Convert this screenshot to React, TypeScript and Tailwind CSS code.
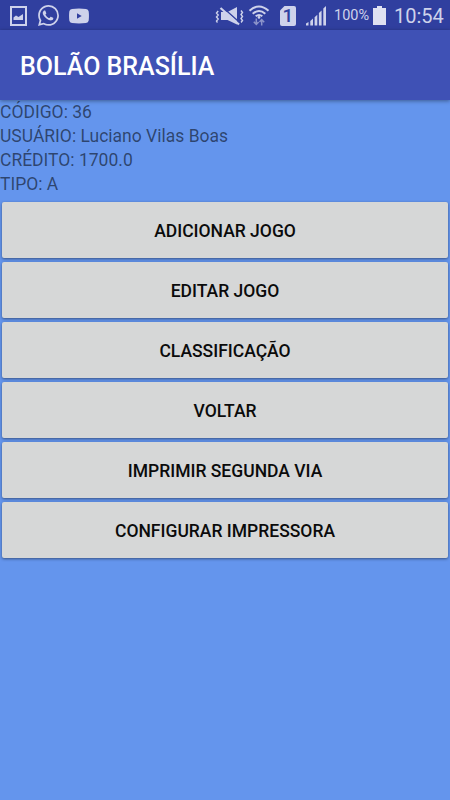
import type { ReactNode } from "react";

const INFO = ["CÓDIGO: 36", "USUÁRIO: Luciano Vilas Boas", "CRÉDITO: 1700.0", "TIPO: A"];

const ACTIONS = [
  "ADICIONAR JOGO",
  "EDITAR JOGO",
  "CLASSIFICAÇÃO",
  "VOLTAR",
  "IMPRIMIR SEGUNDA VIA",
  "CONFIGURAR IMPRESSORA",
];

// ---------------------------------------------------------------------------
// Status bar icons
// ---------------------------------------------------------------------------

function PictureIcon() {
  return (
    <svg className="ml-[10px]" width="17" height="20" viewBox="0 0 17 20" fill="none">
      <path d="M1 1h15v18H1z" stroke="currentColor" strokeWidth="2" />
      <path d="M3.5 14v-2.5l2.5-2 2.500 1.500 4.500-3v6z" fill="currentColor" />
    </svg>
  );
}

function WhatsAppIcon() {
  return (
    <svg className="ml-[11px]" width="21" height="21" viewBox="0 0 24 24" fill="currentColor">
      <path d="M.06 24l1.69-6.16a11.87 11.87 0 0 1-1.59-5.95C.16 5.34 5.5 0 12.05 0a11.82 11.82 0 0 1 8.41 3.49 11.82 11.82 0 0 1 3.48 8.41c0 6.56-5.34 11.9-11.89 11.9a11.9 11.9 0 0 1-5.69-1.45zM6.65 20.19c1.68 1 3.28 1.6 5.39 1.6 5.45 0 9.89-4.43 9.89-9.88A9.86 9.86 0 0 0 12.05 2c-5.45 0-9.88 4.43-9.88 9.88 0 2.23.65 3.89 1.74 5.63l-1 3.65z" />
      <path d="M17.44 14.75c-.07-.12-.27-.2-.57-.35s-1.76-.87-2.03-.97c-.27-.1-.47-.15-.67.15-.2.3-.77.97-.94 1.16-.17.2-.35.23-.64.08-.3-.15-1.26-.46-2.39-1.48-.88-.79-1.48-1.76-1.65-2.06-.17-.3-.02-.46.13-.6.13-.14.3-.35.45-.53.15-.17.2-.29.3-.49.1-.2.05-.37-.03-.52-.07-.15-.67-1.61-.91-2.21-.24-.58-.49-.5-.67-.51l-.57-.01c-.2 0-.52.07-.79.37s-1.04 1.02-1.04 2.48 1.06 2.88 1.21 3.07c.15.2 2.1 3.2 5.08 4.49.71.3 1.26.49 1.69.63.71.22 1.36.19 1.87.12.57-.09 1.76-.72 2.01-1.41.25-.7.25-1.3.17-1.42z" />
    </svg>
  );
}

function YoutubeIcon() {
  return (
    <svg className="ml-[10px]" width="20" height="16" viewBox="0 0 20 16">
      <path
        d="M3 .9Q10 .2 17 .9q2.4.3 2.7 2.7.5 4.4 0 8.8-.3 2.4-2.7 2.7-7 .7-14 0Q.6 14.8.3 12.4q-.5-4.4 0-8.8Q.6 1.2 3 .9zM8 5.2v5.6l4.7-2.8z"
        fill="currentColor"
        fillRule="evenodd"
      />
    </svg>
  );
}

function MuteIcon() {
  return (
    <svg width="29" height="20" viewBox="0 0 29 20" fill="none" stroke="currentColor">
      <path d="M3.2 5L1.5 7l1.7 2-1.7 2 1.700 2-1.700 2 1 1.500M26 4.500l1.500 2-1.500 2 1.500 2-1.500 2 1.500 2-1.500 2" strokeWidth="1.4" />
      <path d="M6 6h6.500L22 1v17.500L12.500 14H6z" fill="currentColor" stroke="none" />
      <path d="M7.200 1L25.500 17.300" stroke="#303f9f" strokeWidth="1.400" />
      <path d="M5.500 2L24 18.500" strokeWidth="2.200" />
    </svg>
  );
}

function WifiIcon() {
  return (
    <svg className="ml-[4px]" width="22" height="21" viewBox="0 0 22 21" fill="none" stroke="currentColor">
      <path d="M1.500 5.800Q11-2.800 20.500 5.800M4.700 8.700q6.300-5.400 12.600 0M7.700 11.300q3.300-2.600 6.600 0" strokeWidth="2.100" />
      <circle cx="11" cy="12.400" r="1.300" fill="currentColor" stroke="none" />
      <g stroke="#8c94ca" strokeWidth="1.500">
        <path d="M8.300 13.500v6M5.800 16.800l2.500 2.700 2.300-2.500" />
        <path d="M13.700 20.500v-6M11.500 17l2.200-2.500 2.500 2.700" />
      </g>
    </svg>
  );
}

function SimIcon() {
  return (
    <div className="relative ml-[10px] h-5 w-4">
      <svg width="16" height="20" viewBox="0 0 16 20">
        <path d="M4.500 0H14q2 0 2 2v16q0 2-2 2H2q-2 0-2-2V4.500z" fill="currentColor" />
      </svg>
      <span className="absolute inset-0 text-center text-[19px] leading-5 font-medium text-[#303f9f]">1</span>
    </div>
  );
}

function SignalIcon() {
  return (
    <svg className="ml-[10px]" width="20" height="20" viewBox="0 0 20 20" fill="currentColor">
      <path d="M0 17.500L2.500 16v3.500H0zM4.300 15L7 12.500v7H4.300zM8.600 11.200l2.700-2.500v10.800H8.600zM12.900 7l2.700-2.500v15h-2.700zM17.300 2.500L20 0v19.500h-2.700z" />
    </svg>
  );
}

function BatteryIcon() {
  return (
    <svg className="ml-[4px]" width="13" height="20" viewBox="0 0 13 20" fill="#dfe1f1">
      <path d="M4 0h5v2h4v17H0V2h4z" />
    </svg>
  );
}

function StatusBar() {
  return (
    <div className="flex h-[30px] items-center bg-[#303f9f] pt-px text-[#ced2eb]">
      <PictureIcon />
      <WhatsAppIcon />
      <YoutubeIcon />
      <div className="ml-auto flex items-center pr-[6px]">
        <MuteIcon />
        <WifiIcon />
        <SimIcon />
        <SignalIcon />
        <span className="ml-[8px] w-[35px] pt-px text-[14.5px] leading-5 whitespace-nowrap">100%</span>
        <BatteryIcon />
        <span className="ml-[8px] w-[50px] text-[20px] leading-6 whitespace-nowrap">10:54</span>
      </div>
    </div>
  );
}

// ---------------------------------------------------------------------------
// Main screen
// ---------------------------------------------------------------------------

function MenuButton({ children }: { children: ReactNode }) {
  return (
    <button className="h-14 rounded-[2px] bg-[#d6d7d7] pt-[2px] text-[17.5px] font-medium text-[#0b0b0b] shadow-[0_1px_3px_rgba(0,0,0,0.45)]">
      {children}
    </button>
  );
}

export default function App() {
  return (
    <div className="flex h-[800px] w-[450px] flex-col overflow-hidden bg-[#6495ed] font-[Roboto,sans-serif]">
      <StatusBar />
      <header className="z-10 flex h-[70px] items-center bg-[#3f51b5] pt-[4px] pl-5 shadow-[0_1px_4px_rgba(0,0,0,0.4)]">
        <h1 className="text-[25px] font-medium whitespace-nowrap text-white">BOLÃO BRASÍLIA</h1>
      </header>

      <div className="text-[17.5px] leading-6 text-black/55">
        {INFO.map((line) => (
          <p key={line}>{line}</p>
        ))}
      </div>

      <div className="flex flex-col gap-1 px-[2px] pt-[6px]">
        {ACTIONS.map((label) => (
          <MenuButton key={label}>{label}</MenuButton>
        ))}
      </div>
    </div>
  );
}
